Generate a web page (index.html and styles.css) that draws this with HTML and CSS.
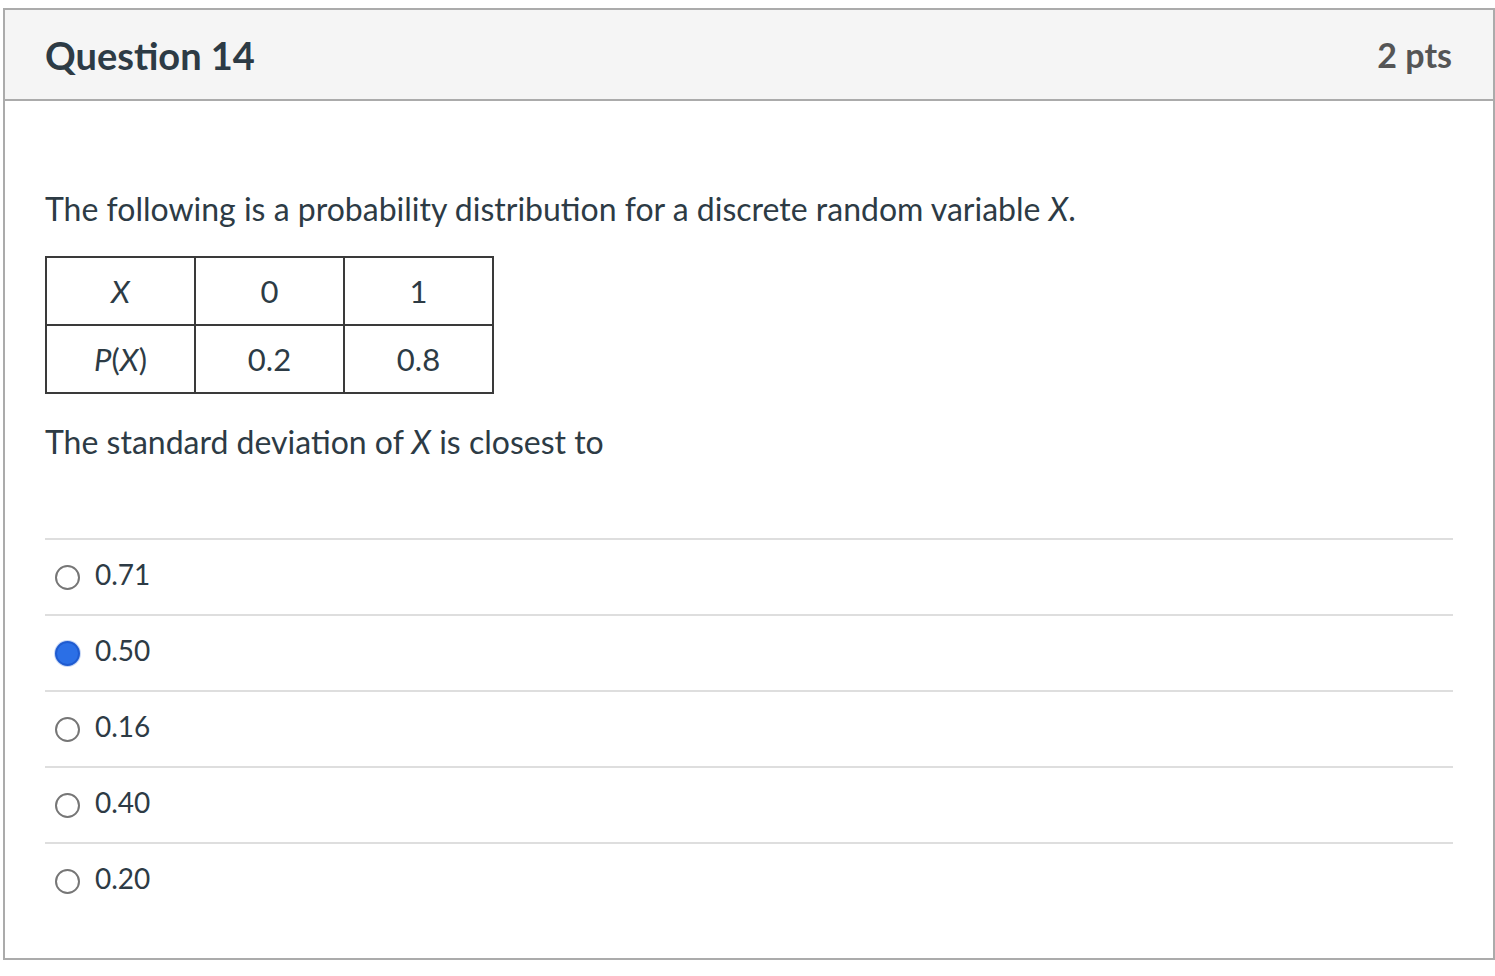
FILE: index.html
```html
<!DOCTYPE html>
<html>
<head>
<meta charset="utf-8">
<link rel="stylesheet" href="styles.css">
</head>
<body>
<div class="question">
  <div class="q-header">
    <h2 class="q-title">Question 14</h2>
    <div class="q-points">2 pts</div>
  </div>
  <div class="q-body">
    <p class="q-text">The following is a probability distribution for a discrete random variable <i>X</i>.</p>
    <table class="dist">
      <tr><td><i>X</i></td><td>0</td><td>1</td></tr>
      <tr><td><i>P</i>(<i>X</i>)</td><td>0.2</td><td>0.8</td></tr>
    </table>
    <p class="q-text q-ask">The standard deviation of <i>X</i> is closest to</p>
    <div class="answers">
      <div class="answer"><span class="radio"></span><span class="label">0.71</span></div>
      <div class="answer"><span class="radio checked"></span><span class="label">0.50</span></div>
      <div class="answer"><span class="radio"></span><span class="label">0.16</span></div>
      <div class="answer"><span class="radio"></span><span class="label">0.40</span></div>
      <div class="answer"><span class="radio"></span><span class="label">0.20</span></div>
    </div>
  </div>
</div>
</body>
</html>
```

FILE: styles.css
```css
html, body {
  margin: 0;
  padding: 0;
  background: #fff;
}
body {
  font-family: Lato, "Open Sans", sans-serif;
  color: #2d3b45;
}
.question {
  box-sizing: border-box;
  margin: 8px 0 0 3px;
  width: 1492px;
  height: 952px;
  border: 2px solid #ababab;
}
.q-header {
  display: flex;
  align-items: center;
  justify-content: space-between;
  height: 89px;
  padding: 0 41px 0 40px;
  background: #f5f5f5;
  border-bottom: 2px solid #ababab;
}
.q-title {
  margin: 0;
  font-size: 38px;
  font-weight: 700;
  color: #2d3b45;
}
.q-points {
  font-size: 34px;
  font-weight: 700;
  color: #555;
}
.q-body {
  padding: 88px 40px 0 40px;
}
.q-text {
  margin: 0;
  font-size: 32px;
  line-height: 40px;
}
.dist {
  margin: 27px 0 0 0;
  border-collapse: collapse;
  font-size: 31px;
}
.dist td {
  width: 147px;
  height: 66px;
  border: 2px solid #3a3a3a;
  text-align: center;
  padding: 0;
}
.q-ask {
  margin-top: 28px;
}
.answers {
  margin-top: 76px;
  border-top: 2px solid #dedede;
}
.answer {
  display: flex;
  align-items: center;
  height: 74px;
  border-bottom: 2px solid #dedede;
  font-size: 28px;
}
.answer:last-child {
  border-bottom: none;
}
.label {
  padding-bottom: 6px;
}
.radio {
  box-sizing: border-box;
  width: 25px;
  height: 25px;
  margin: 0 15px 0 10px;
  border: 2px solid #767676;
  border-radius: 50%;
  background: #fff;
}
.radio.checked {
  border: 2px solid #1f5bd0;
  background: #2b6fe6;
  box-shadow: 0 0 0 1px #c8d8f6;
}
```
